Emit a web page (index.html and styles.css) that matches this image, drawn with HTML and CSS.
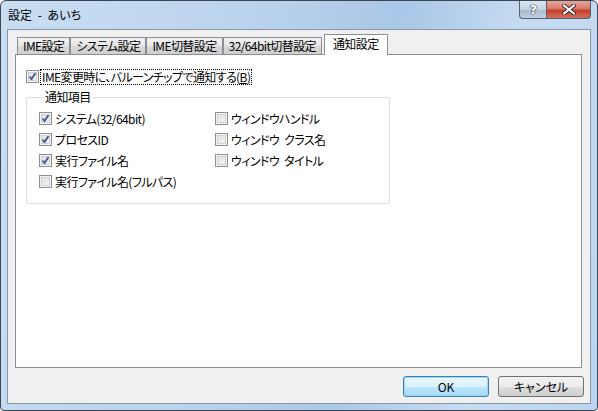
FILE: index.html
```html
<!DOCTYPE html>
<html lang="ja">

<head>
    <meta charset="UTF-8">
    <title>設定 - あいち</title>
    <link rel="stylesheet" href="styles.css">
</head>

<body>
    <div class="window">
        <div class="titlebar">
            <span class="title">設定 - あいち</span>
            <div class="caption-buttons">
                <span class="cap-btn help">?</span>
                <span class="cap-btn close">
                    <svg width="14" height="11" viewBox="0 0 14 11">
                        <path d="M2 1.5 L12 9.5 M12 1.5 L2 9.5" stroke="#3a2a2a" stroke-width="4" stroke-linecap="square" />
                        <path d="M2 1.5 L12 9.5 M12 1.5 L2 9.5" stroke="#ffffff" stroke-width="2" stroke-linecap="square" />
                    </svg>
                </span>
            </div>
        </div>

        <div class="client">
            <div class="tabs">
                <span class="tab">IME設定</span>
                <span class="tab">システム設定</span>
                <span class="tab">IME切替設定</span>
                <span class="tab">32/64bit切替設定</span>
                <span class="tab active">通知設定</span>
            </div>

            <div class="panel">
                <label class="check main">
                    <span class="cb checked"></span>
                    <span class="focus">IME変更時に、バルーンチップで通知する(<u>B</u>)</span>
                </label>

                <fieldset class="group">
                    <legend>通知項目</legend>
                    <div class="grid">
                        <label class="check"><span class="cb checked"></span>システム(32/64bit)</label>
                        <label class="check"><span class="cb"></span>ウィンドウハンドル</label>
                        <label class="check"><span class="cb checked"></span>プロセスID</label>
                        <label class="check"><span class="cb"></span>ウィンドウ クラス名</label>
                        <label class="check"><span class="cb checked"></span>実行ファイル名</label>
                        <label class="check"><span class="cb"></span>ウィンドウ タイトル</label>
                        <label class="check"><span class="cb"></span>実行ファイル名(フルパス)</label>
                    </div>
                </fieldset>
            </div>

            <div class="buttons">
                <button class="btn default">OK</button>
                <button class="btn">キャンセル</button>
            </div>
        </div>
    </div>
</body>

</html>
```

FILE: styles.css
```css
body {
    margin: 0;
    font-family: "Noto Sans CJK JP", "DejaVu Sans", sans-serif;
    font-size: 12px;
    font-feature-settings: "palt";
    letter-spacing: -0.6px;
    word-spacing: 3px;
    color: #000;
}

.window {
    width: 598px;
    height: 411px;
    box-sizing: border-box;
    border: 1px solid #3b4654;
    border-radius: 6px 6px 4px 4px;
    background: linear-gradient(100deg, #c9def2 0%, #b7d0ea 45%, #a9c7e6 60%, #c7dcf1 80%, #bcd6ef 100%);
    padding: 0 6px 6px 6px;
    display: flex;
    flex-direction: column;
}

.titlebar {
    height: 28px;
    display: flex;
    align-items: flex-start;
}

.title {
    padding: 7px 0 0 1px;
    line-height: 14px;
    letter-spacing: 0;
}

.caption-buttons {
    margin-left: auto;
    display: flex;
}

.cap-btn {
    height: 18px;
    box-sizing: border-box;
    border: 1px solid #56606e;
    border-top: none;
    display: flex;
    align-items: center;
    justify-content: center;
}

.help {
    width: 27px;
    border-right: none;
    border-radius: 0 0 0 4px;
    background: linear-gradient(#dbe5f0 0%, #c3d2e2 50%, #a9bbd0 55%, #bfd0e2 100%);
    color: #fff;
    font-family: "DejaVu Sans", sans-serif;
    font-weight: bold;
    font-size: 13px;
    text-shadow: 0 0 1px #333, 0 0 1px #333, 0 0 1px #333;
}

.close {
    width: 45px;
    border-radius: 0 0 4px 0;
    background: linear-gradient(#e6a699 0%, #d87a6a 45%, #c4412b 55%, #d3705d 100%);
}

.client {
    flex: 1;
    border: 1px solid #8897a9;
    background: #f0f0f0;
    display: flex;
    flex-direction: column;
    padding: 4px 8px 0 7px;
}

.tabs {
    display: flex;
    align-items: flex-end;
    padding-left: 2px;
    height: 20px;
}

.tab {
    height: 16px;
    line-height: 16px;
    padding: 0 5px;
    border: 1px solid #8c8e94;
    border-bottom: none;
    background: linear-gradient(#f3f3f3, #e6e6e6 50%, #d9d9d9 51%, #cfcfcf);
    white-space: nowrap;
}

.tab.active {
    height: 20px;
    line-height: 18px;
    padding: 0 8px;
    margin-left: 2px;
    margin-bottom: -1px;
    background: #fff;
    position: relative;
    z-index: 1;
}

.panel {
    flex: 1;
    border: 1px solid #8c8e94;
    background: #fff;
    padding: 11px 0 0 10px;
}

.check {
    display: flex;
    align-items: center;
    height: 21px;
    white-space: nowrap;
}

.cb {
    width: 13px;
    height: 13px;
    box-sizing: border-box;
    border: 1px solid #8e8f8f;
    background: linear-gradient(135deg, #dcdcdc, #f8f8f8);
    box-shadow: inset 0 0 0 1px #f4f4f4, inset 0 0 0 2px #cfcfcf;
    margin-right: 3px;
    flex: none;
}

.cb.checked {
    background: url("data:image/svg+xml;utf8,<svg xmlns='http://www.w3.org/2000/svg' width='11' height='11'><path d='M2.5 5.5 L4.5 8 L8.5 2' fill='none' stroke='%234a5f97' stroke-width='2'/></svg>") center no-repeat, linear-gradient(135deg, #dcdcdc, #f8f8f8);
}

.main .focus {
    border: 1px dotted #000;
    padding: 0 1px;
    line-height: 14px;
}

.main .cb {
    margin-right: 1px;
}

.group {
    margin: 3px 0 0 0;
    width: 364px;
    height: 114px;
    box-sizing: border-box;
    border: 1px solid #d5dfe5;
    border-radius: 3px;
    padding: 4px 0 0 12px;
}

.group legend {
    padding: 0 2px;
    margin-left: 4px;
    line-height: 14px;
}

.grid {
    display: grid;
    grid-template-columns: 176px auto;
}

.buttons {
    display: flex;
    justify-content: flex-end;
    gap: 9px;
    padding: 8px 0 6px 0;
    margin-right: -2px;
}

.btn {
    width: 86px;
    height: 21px;
    font: inherit;
    border: 1px solid #707070;
    border-radius: 3px;
    background: linear-gradient(#f2f2f2, #ebebeb 50%, #dddddd 51%, #cfcfcf);
    padding: 0;
}

.btn.default {
    border-color: #3c7fb1;
    background: linear-gradient(#eaf6fd, #d9f0fc 50%, #bee6fd 51%, #a7d9f5);
    box-shadow: inset 0 0 0 1px #96d9f9;
}
```
